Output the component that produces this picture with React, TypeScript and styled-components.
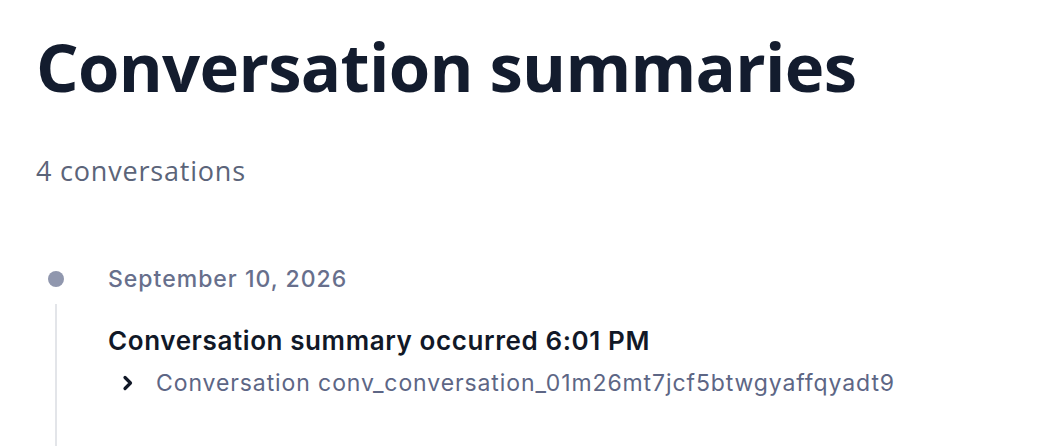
import React from "react";
import styled, { createGlobalStyle } from "styled-components";

const GlobalStyle = createGlobalStyle`
  html, body {
    margin: 0;
    padding: 0;
    background: #ffffff;
  }
  body {
    font-family: Inter, "Liberation Sans", sans-serif;
    color: #111827;
  }
`;

const Page = styled.div`
  padding: 24px 36px 0 36px;
  height: 446px;
  box-sizing: border-box;
  overflow: hidden;
`;

const Title = styled.h1`
  margin: 0;
  font-family: "Open Sans", "Liberation Sans", sans-serif;
  font-weight: 700;
  font-size: 67px;
  line-height: 84px;
  letter-spacing: -0.7px;
  color: #131c2e;
`;

const Count = styled.p`
  margin: 46px 0 0 0;
  font-family: "Open Sans", "Liberation Sans", sans-serif;
  font-size: 27px;
  line-height: 34px;
  letter-spacing: 0.8px;
  color: #5b6479;
`;

const Timeline = styled.div`
  margin-top: 75px;
  display: grid;
  grid-template-columns: 40px 1fr;
  column-gap: 32px;
`;

const Rail = styled.div`
  display: flex;
  flex-direction: column;
  align-items: center;
`;

const Dot = styled.span`
  width: 16px;
  height: 16px;
  border-radius: 50%;
  background: #9097ae;
  margin-top: 8px;
`;

const Line = styled.span`
  width: 2px;
  flex: 1;
  min-height: 160px;
  margin-top: 17px;
  background: #e3e5e9;
`;

const Entry = styled.div`
  display: flex;
  flex-direction: column;
`;

const DateLabel = styled.div`
  font-size: 23px;
  font-weight: 500;
  line-height: 32px;
  letter-spacing: 1px;
  color: #676f8c;
`;

const EventTitle = styled.div`
  margin-top: 29px;
  font-size: 26px;
  font-weight: 600;
  line-height: 34px;
  letter-spacing: 0.6px;
  color: #111827;
`;

const Disclosure = styled.button`
  margin-top: 9px;
  padding: 0 0 0 13px;
  border: none;
  background: none;
  display: flex;
  align-items: center;
  gap: 21px;
  font-family: Inter, "Liberation Sans", sans-serif;
  font-size: 23px;
  line-height: 32px;
  letter-spacing: 0.9px;
  color: #5d6685;
  cursor: pointer;
  text-align: left;
`;

const Chevron = () => (
  <svg width="14" height="16" viewBox="0 0 14 16" fill="none">
    <path
      d="M4 2.5l5.5 5.5-5.5 5.5"
      stroke="#111827"
      strokeWidth="3.2"
      strokeLinecap="round"
      strokeLinejoin="round"
    />
  </svg>
);

export default function App() {
  return (
    <>
      <GlobalStyle />
      <Page>
        <Title>Conversation summaries</Title>
        <Count>4 conversations</Count>
        <Timeline>
          <Rail>
            <Dot />
            <Line />
          </Rail>
          <Entry>
            <DateLabel>September 10, 2026</DateLabel>
            <EventTitle>Conversation summary occurred 6:01 PM</EventTitle>
            <Disclosure>
              <Chevron />
              <span>Conversation conv_conversation_01m26mt7jcf5btwgyaffqyadt9</span>
            </Disclosure>
          </Entry>
        </Timeline>
      </Page>
    </>
  );
}
